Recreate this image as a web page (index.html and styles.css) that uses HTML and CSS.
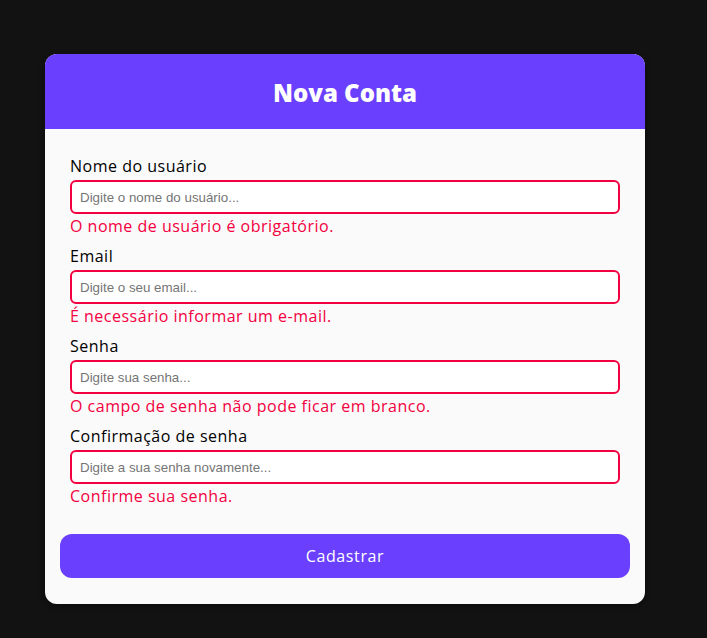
FILE: index.html
```html
<!DOCTYPE html>
<html lang="pt-BR">
<head>
<meta charset="utf-8">
<title>Nova Conta</title>
<link rel="stylesheet" href="styles.css">
</head>
<body>
<div class="card">
  <header class="card-header"><h1>Nova Conta</h1></header>
  <form class="form">
    <div class="field">
      <label>Nome do usuário</label>
      <input type="text" placeholder="Digite o nome do usuário...">
      <span class="error">O nome de usuário é obrigatório.</span>
    </div>
    <div class="field">
      <label>Email</label>
      <input type="text" placeholder="Digite o seu email...">
      <span class="error">É necessário informar um e-mail.</span>
    </div>
    <div class="field">
      <label>Senha</label>
      <input type="password" placeholder="Digite sua senha...">
      <span class="error">O campo de senha não pode ficar em branco.</span>
    </div>
    <div class="field">
      <label>Confirmação de senha</label>
      <input type="password" placeholder="Digite a sua senha novamente...">
      <span class="error">Confirme sua senha.</span>
    </div>
    <button type="button" class="submit">Cadastrar</button>
  </form>
</div>
</body>
</html>
```
FILE: styles.css
```css
* { box-sizing: border-box; }
html, body { margin: 0; }
body {
  background: #121212;
  padding: 54px 0 0 45px;
  font-family: "Open Sans", "DejaVu Sans", sans-serif;
  min-height: 638px;
}
.card {
  width: 600px;
  height: 550px;
  background: #fafafa;
  border-radius: 12px;
  overflow: hidden;
  box-shadow: 0 2px 6px rgba(0,0,0,0.4);
}
.card-header {
  height: 75px;
  background: #6a40fe;
  display: flex;
  align-items: center;
  justify-content: center;
}
.card-header h1 {
  margin: 0;
  color: #fff;
  font-size: 24px;
  font-weight: 800;
  padding-top: 1px;
}
.form {
  display: flex;
  flex-direction: column;
  padding: 25px 15px 0;
}
.field {
  display: flex;
  flex-direction: column;
  padding: 0 10px;
  margin-bottom: 6px;
}
.field label {
  font-size: 16px;
  line-height: 24px;
  color: #000;
  margin-bottom: 2px;
  letter-spacing: 0.5px;
}
.field input {
  height: 34px;
  border: 2px solid #f20040;
  border-radius: 6px;
  background: #fff;
  padding: 0 8px;
  font-family: "Liberation Sans", Arial, sans-serif;
  font-size: 13.33px;
  outline: none;
}
.field input::placeholder { color: #757575; }
.error {
  font-size: 16px;
  line-height: 24px;
  color: #f20040;
  letter-spacing: 0.5px;
}
.submit {
  margin-top: 20px;
  height: 44px;
  border: none;
  border-radius: 12px;
  background: #6a40fe;
  color: #fff;
  font-family: "Open Sans", "DejaVu Sans", sans-serif;
  font-size: 16px;
  letter-spacing: 0.6px;
}
```
